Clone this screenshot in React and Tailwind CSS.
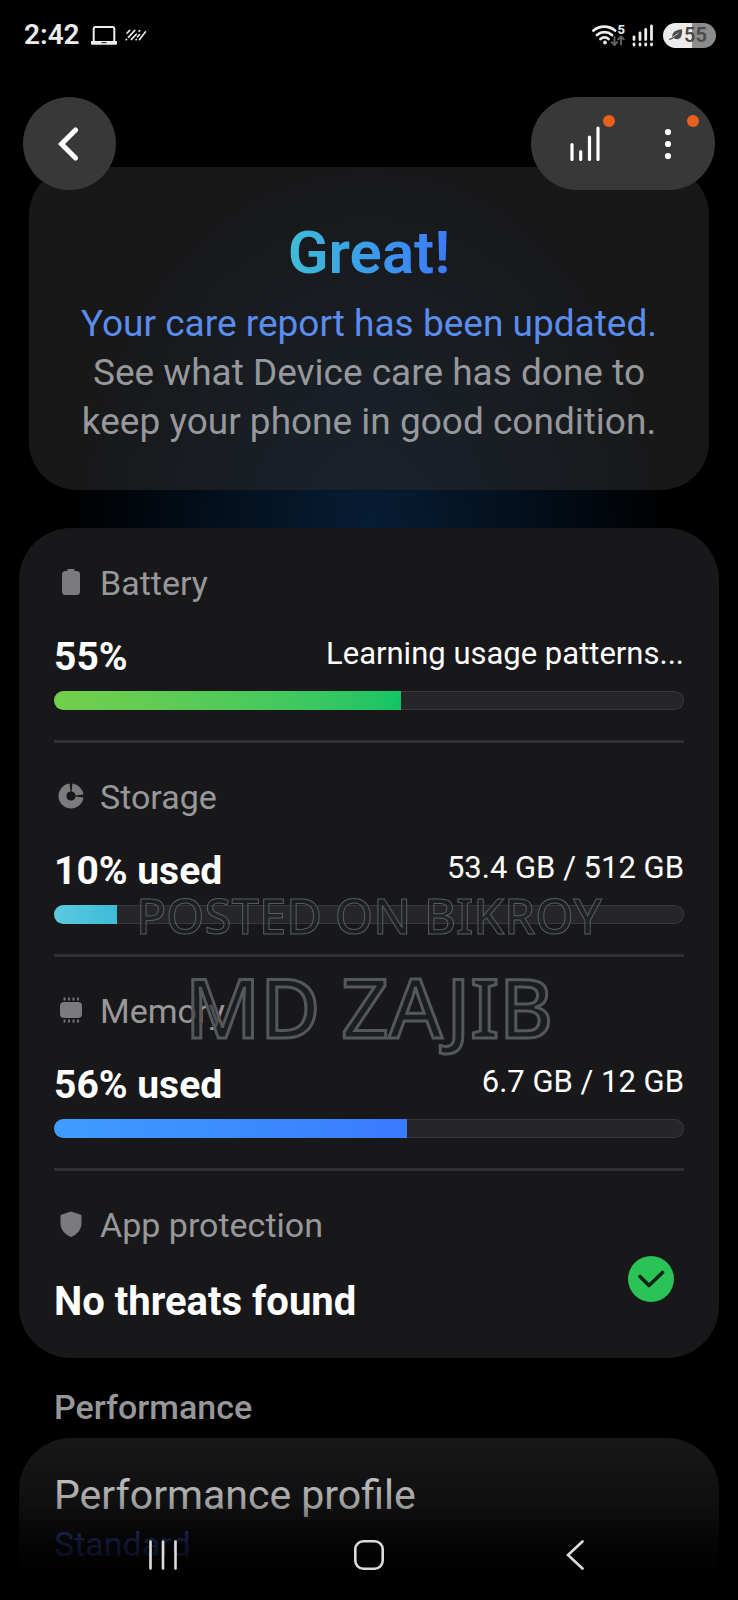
const stats = [
  {
    id: 'battery',
    label: 'Battery',
    value: '55%',
    detail: 'Learning usage patterns...',
    percent: 55,
    fill: 'bg-gradient-to-r from-[#73cf4b] to-[#0fc566]',
    Icon: BatteryIcon,
  },
  {
    id: 'storage',
    label: 'Storage',
    value: '10% used',
    detail: '53.4 GB / 512 GB',
    percent: 10,
    fill: 'bg-gradient-to-r from-[#5cc9de] to-[#3cbbd9]',
    Icon: StorageIcon,
  },
  {
    id: 'memory',
    label: 'Memory',
    value: '56% used',
    detail: '6.7 GB / 12 GB',
    percent: 56,
    fill: 'bg-gradient-to-r from-[#3f9dff] to-[#3b7aff]',
    Icon: MemoryIcon,
  },
];

function BatteryIcon() {
  return (
    <svg viewBox="0 0 26 26" className="size-[26px]" fill="currentColor">
      <path d="M9.500 0h7v2h2A3.500 3.500 0 0 1 22 5.500V22.500A3.500 3.500 0 0 1 18.500 26h-11A3.500 3.500 0 0 1 4 22.500V5.500A3.500 3.500 0 0 1 7.500 2h2z" />
    </svg>
  );
}

function StorageIcon() {
  return (
    <svg viewBox="0 0 26 26" className="size-[26px]" fill="none" stroke="currentColor" strokeWidth="8">
      <path d="M12 4.550A8.500 8.500 0 1 0 21.450 14" />
      <path d="M14 4.550A8.500 8.500 0 0 1 21.450 12" />
    </svg>
  );
}

function MemoryIcon() {
  return (
    <svg viewBox="0 0 26 26" className="size-[26px]" fill="currentColor">
      <rect x="2" y="5" width="22" height="16" rx="4" />
      <path
        d="M6.500 .5v3M11 .5v3M15.500 .5v3M20 .5v3M6.500 22.500v3M11 22.500v3M15.500 22.500v3M20 22.500v3"
        stroke="currentColor"
        strokeWidth="1.800"
      />
    </svg>
  );
}

function ShieldIcon() {
  return (
    <svg viewBox="0 0 26 26" className="size-[26px]" fill="currentColor">
      <path d="M13 .5 22.200 3.400q1.300.4 1.300 1.700V12c0 7-4.500 11.500-10.500 14C7 23.500 2.500 19 2.500 12V5.100q0-1.300 1.300-1.700z" />
    </svg>
  );
}

function StatusBar() {
  return (
    <div className="flex h-[70px] items-center justify-between pr-[22px] pl-6 text-[#ececec]">
      <div className="flex items-center">
        <span className="text-[28px] leading-8 font-semibold">2:42</span>
        <svg viewBox="0 0 26 19" className="ml-[11px] h-[19px] w-[26px]">
          <rect x="2.700" y="1" width="20.600" height="15" rx="2" fill="none" stroke="currentColor" strokeWidth="2" />
          <path d="M0 15h26V17.500a1.200 1.200 0 0 1-1.200 1.200H1.200A1.200 1.200 0 0 1 0 17.500z" fill="currentColor" />
          <path d="M10.500 16.600h5" stroke="#333" strokeWidth="1.200" />
        </svg>
        <svg
          viewBox="0 0 22 12"
          className="ml-2 h-3 w-[22px]"
          fill="none"
          stroke="currentColor"
          strokeWidth="1.600"
          strokeLinecap="round"
        >
          <path d="M2 4.200 4.600 1.400M3.500 8.300 9.800 1.400M1.200 10.800l.4-.4M6.500 10.400 11.300 5.200M14 2.300l.7-.7M11 10.800l.5-.5M12.500 7.800l2-2.200M14.500 10.600 20.500 2.800" />
        </svg>
      </div>

      <div className="flex items-center">
        <svg viewBox="0 0 33 24" className="h-6 w-[33px]" fill="none" stroke="currentColor" strokeLinecap="round">
          <g strokeWidth="2.800">
            <path d="M1.500 7.500a17 17 0 0 1 21.500 0" />
            <path d="M5 12a11.500 11.500 0 0 1 15 0" />
            <path d="M8.500 16a6 6 0 0 1 8 0" />
          </g>
          <circle cx="13" cy="19.500" r="1.900" fill="currentColor" stroke="none" />
          <text
            x="25.500"
            y="11"
            fontSize="13"
            fontWeight="700"
            fill="currentColor"
            stroke="none"
            fontFamily="Roboto, sans-serif"
          >
            5
          </text>
          <path d="M22.500 14v8m-2.800-2.800 2.800 2.800 2.800-2.800M29 21.500v-8m-2.800 2.800L29 13.500l2.800 2.800" stroke="#666" strokeWidth="1.900" />
        </svg>
        <svg viewBox="0 0 22 24" className="ml-[7px] h-6 w-[22px]" stroke="currentColor" strokeWidth="2.800" strokeLinecap="round">
          <path d="M2 14v2.500M8 10v6.500M13.700 6.500v10M19.500 3v13.500M2 21v1M8 21v1M13.700 21v1M19.500 21v1" />
        </svg>
        <div className="ml-[9px] flex h-[25px] w-[53px] items-center rounded-full bg-[linear-gradient(to_right,#ececec_55%,#8c8c8c_55%)] pl-1.5 text-[#4a4a4a]">
          <svg viewBox="0 0 14 12" className="h-3 w-3.5 shrink-0" fill="currentColor">
            <path d="M13 .3c.5 6-1.200 10-5 10-1.500 0-2.500-.5-3.300-1.200C3.500 10 2 10.800.3 11l-.2-1.200c1.300-.3 2.400-.8 3.300-1.600-.1-.4-.2-.9-.1-1.500C3.500 2.500 8 .8 13 .3z" />
            <path d="M3.500 8.300C5.500 7 7.500 5.500 9.500 4" stroke="#ececec" strokeWidth=".8" fill="none" />
          </svg>
          <span className="ml-px text-[20px] leading-6 font-semibold">55</span>
        </div>
      </div>
    </div>
  );
}

function Header() {
  return (
    <header className="relative z-10 mt-[27px] flex h-[93px] justify-between px-[23px]">
      <button type="button" aria-label="Navigate up" className="flex size-[93px] items-center justify-center rounded-full bg-[#383838]">
        <svg
          viewBox="0 0 24 36"
          className="h-9 w-6"
          fill="none"
          stroke="#fff"
          strokeWidth="5"
          strokeLinecap="round"
        >
          <path d="M17.500 4 3.500 18l14 14" />
        </svg>
      </button>

      <div className="flex h-[93px] w-[184px] rounded-full bg-[#383838]">
        <button type="button" aria-label="Care report" className="relative flex w-[93px] items-center justify-center pl-3.5">
          <svg viewBox="0 0 30 36" className="h-9 w-[30px]" stroke="#fff" strokeWidth="3.200" strokeLinecap="round">
            <path d="M2 18.500V33.500M10.700 25.500V33.500M19.500 11V33.500M28 2v31.500" />
          </svg>
          <span className="absolute top-[18px] right-[9px] size-[12px] rounded-full bg-[#e8601c]" />
        </button>
        <button type="button" aria-label="More options" className="relative flex flex-1 items-center justify-center pr-1">
          <svg viewBox="0 0 8 32" className="h-8 w-2" fill="#fff">
            <circle cx="4" cy="4" r="3.100" />
            <circle cx="4" cy="16" r="3.100" />
            <circle cx="4" cy="28" r="3.100" />
          </svg>
          <span className="absolute top-[18px] right-[16px] size-[12px] rounded-full bg-[#e8601c]" />
        </button>
      </div>
    </header>
  );
}

function StatRow({ label, value, detail, percent, fill, Icon }) {
  return (
    <section className="border-b-[3px] border-[#303032] pb-[30px]">
      <h2 className="flex h-10 items-center text-[34px] leading-10 text-[#98989a]">
        <span className="mr-4 mb-0.5 ml-1 text-[#7b7b7d]">
          <Icon />
        </span>
        {label}
      </h2>
      <div className="mt-8 flex items-start justify-between text-white">
        <span className="text-[39px] leading-11 font-bold">{value}</span>
        <span className="text-[31px] leading-[38px]">{detail}</span>
      </div>
      <div
        role="progressbar"
        aria-label={label}
        aria-valuenow={percent}
        aria-valuemin={0}
        aria-valuemax={100}
        className="mt-3 h-[19px] overflow-hidden rounded-full bg-[#262628] inset-ring inset-ring-[#38383a]"
      >
        <div className={`h-full ${fill}`} style={{ width: `${percent}%` }} />
      </div>
    </section>
  );
}

function Watermark() {
  return (
    <div className="pointer-events-none absolute inset-x-0 top-[880px] text-center font-['Noto_Sans',sans-serif] font-medium whitespace-nowrap text-[#1c2126]/60 [stroke-linejoin:round]">
      <p className="text-[49px] leading-[70px] [-webkit-text-stroke:1px_#5a5c60]">POSTED ON BIKROY</p>
      <p className="text-[82px] leading-[112px] [-webkit-text-stroke:3px_#55575a]">MD ZAJIB</p>
    </div>
  );
}

function NavigationBar() {
  return (
    <nav className="fixed inset-x-0 bottom-0 flex h-[160px] items-end justify-around bg-[linear-gradient(to_bottom,transparent,rgb(0_0_0/0.35)_40%,rgb(0_0_0/0.8)_65%,#000_90%)] px-[60px] pb-[22px] text-[#dcdcdc]">
      <button type="button" aria-label="Recent apps" className="flex size-[46px] items-center justify-center">
        <svg viewBox="0 0 30 30" className="size-[30px]" stroke="currentColor" strokeWidth="2.600" strokeLinecap="round">
          <path d="M2.500 1.500v27M15 1.500v27M27.500 1.500v27" />
        </svg>
      </button>
      <button type="button" aria-label="Home" className="flex size-[46px] items-center justify-center">
        <svg viewBox="0 0 30 30" className="size-[30px]" fill="none" stroke="currentColor" strokeWidth="2.600">
          <rect x="1.300" y="1.300" width="27.400" height="27.400" rx="8" />
        </svg>
      </button>
      <button type="button" aria-label="Back" className="flex size-[46px] items-center justify-center">
        <svg viewBox="0 0 18 30" className="h-[30px] w-[18px]" fill="none" stroke="currentColor" strokeWidth="2.600" strokeLinecap="round">
          <path d="M16.500 1.500 2 15l14.500 13.500" />
        </svg>
      </button>
    </nav>
  );
}

export default function App() {
  return (
    <div className="relative h-screen overflow-hidden bg-black font-[Roboto,sans-serif]">
      <StatusBar />
      <Header />

      <main className="-mt-[23px]">
        <div className="bg-[radial-gradient(ellipse_300px_380px_at_50%_100%,#071d35,#04111f_45%,#000_100%)] px-[29px] pb-[38px]">
          <section className="rounded-[48px] bg-[#272729]/62 px-12 pt-[54px] pb-11 text-center">
            <h1 className="text-[60px] leading-16 font-semibold">
              <span className="bg-gradient-to-r from-[#41bcd6] to-[#3d78fa] bg-clip-text text-transparent">Great!</span>
            </h1>
            <p className="mt-3.5 text-[37px] leading-[49px] text-[#96989c]">
              <a href="#report" className="block text-[#5b8def]">
                Your care report has been updated.
              </a>
              See what Device care has done to keep your phone in good condition.
            </p>
          </section>
        </div>

        <div className="mx-[19px] rounded-[52px] bg-[#18181a] px-[35px] pt-[35px] pb-[34px]">
          <div className="space-y-[34px]">
            {stats.map((stat) => (
              <StatRow key={stat.id} {...stat} />
            ))}
          </div>

          <section className="mt-[34px] flex justify-between">
            <div>
              <h2 className="flex h-10 items-center text-[34px] leading-10 text-[#98989a]">
                <span className="mr-4 mb-0.5 ml-1 text-[#7b7b7d]">
                  <ShieldIcon />
                </span>
                App protection
              </h2>
              <p className="mt-[35px] text-[40px] leading-11 font-bold text-white">No threats found</p>
            </div>
            <svg viewBox="0 0 46 46" className="mr-2.5 mb-[22px] size-[46px] self-end">
              <circle cx="23" cy="23" r="23" fill="#2ac355" />
              <path
                d="M12 20.500 21 29.500 34.500 16.500"
                fill="none"
                stroke="#0c2413"
                strokeWidth="3.600"
                strokeLinecap="round"
                strokeLinejoin="round"
              />
            </svg>
          </section>
        </div>

        <h2 className="mt-[29px] px-[54px] text-[34px] leading-10 font-medium text-[#979799]">Performance</h2>
        <section className="mx-[19px] mt-[11px] rounded-[52px] bg-[#18181a] px-[35px] pt-[33px] pb-10">
          <p className="text-[41px] leading-12 text-[#f2f2f2]">Performance profile</p>
          <p className="mt-[5px] text-[34px] leading-10 text-[#4a6be0]">Standard</p>
        </section>
      </main>

      <Watermark />
      <NavigationBar />
    </div>
  );
}
